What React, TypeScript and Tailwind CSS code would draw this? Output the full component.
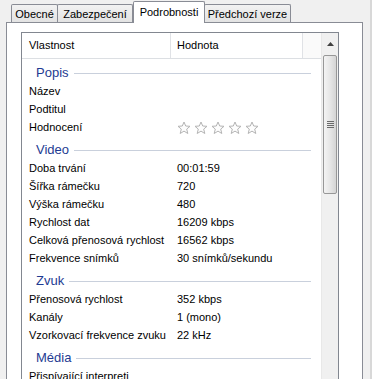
import React from 'react'

type Row = { label: string; value?: string; stars?: boolean }
type Group = { title: string; rows: Row[] }

const groups: Group[] = [
  {
    title: 'Popis',
    rows: [{ label: 'Název' }, { label: 'Podtitul' }, { label: 'Hodnocení', stars: true }],
  },
  {
    title: 'Video',
    rows: [
      { label: 'Doba trvání', value: '00:01:59' },
      { label: 'Šířka rámečku', value: '720' },
      { label: 'Výška rámečku', value: '480' },
      { label: 'Rychlost dat', value: '16209 kbps' },
      { label: 'Celková přenosová rychlost', value: '16562 kbps' },
      { label: 'Frekvence snímků', value: '30 snímků/sekundu' },
    ],
  },
  {
    title: 'Zvuk',
    rows: [
      { label: 'Přenosová rychlost', value: '352 kbps' },
      { label: 'Kanály', value: '1 (mono)' },
      { label: 'Vzorkovací frekvence zvuku', value: '22 kHz' },
    ],
  },
  {
    title: 'Média',
    rows: [{ label: 'Přispívající interpreti' }],
  },
]

const tabs = [
  { label: 'Obecné', w: 'w-[47px]' },
  { label: 'Zabezpečení', w: 'w-[76px]' },
  { label: 'Podrobnosti', w: 'w-[72px]' },
  { label: 'Předchozí verze', w: 'w-[87px]' },
]

function Star() {
  return (
    <svg width="14" height="14" viewBox="0 0 14 14" className="shrink-0">
      <path
        d="M7 1 L8.7 5 L13 5.3 L9.7 8.1 L10.8 12.5 L7 10.1 L3.2 12.5 L4.3 8.1 L1 5.3 L5.3 5 Z"
        fill="#fdfdfd"
        stroke="#b4b4b4"
        strokeWidth="1"
        strokeLinejoin="round"
      />
    </svg>
  )
}

function ScrollBar() {
  return (
    <div className="w-[17px] shrink-0 bg-[#f0f0f0] flex flex-col border-l border-[#e8e8e8]">
      <div className="h-[22px] flex items-center justify-center">
        <svg width="7" height="4" viewBox="0 0 7 4">
          <path d="M0 4 L3.5 0 L7 4 Z" fill="#404040" />
        </svg>
      </div>
      <div className="mx-[1px] h-[139px] rounded-[2px] border border-[#979797] bg-gradient-to-r from-[#f3f3f3] via-[#e6e6e6] to-[#d5d5d5] flex flex-col items-center justify-center gap-[1px]">
        <div className="w-[7px] h-[1px] bg-[#6a6a6a]" />
        <div className="w-[7px] h-[1px] bg-[#6a6a6a]" />
        <div className="w-[7px] h-[1px] bg-[#6a6a6a]" />
        <div className="w-[7px] h-[1px] bg-[#6a6a6a]" />
      </div>
    </div>
  )
}

export default function App() {
  return (
    <div
      className="w-[372px] h-[379px] overflow-hidden bg-[#f0f0f0] text-[11px] text-black flex"
      style={{ fontFamily: '"Liberation Sans", Arial, sans-serif' }}
    >
      <div className="flex flex-col w-[368px]">
        {/* Tabs */}
        <div className="flex items-end pl-[11px] h-[22px] shrink-0">
          {tabs.map((t) => {
            const active = t.label === 'Podrobnosti'
            return active ? (
              <div
                key={t.label}
                className={`${t.w} relative z-10 -mb-px h-[22px] border border-b-0 border-[#898c95] rounded-t-[2px] bg-white flex items-start justify-center pt-[3px] leading-[14px]`}
              >
                {t.label}
              </div>
            ) : (
              <div
                key={t.label}
                className={`${t.w} h-[18px] border border-b-0 border-[#898c95] rounded-t-[2px] bg-gradient-to-b from-[#f2f2f2] to-[#e3e3e3] flex items-center justify-center leading-[14px] -ml-px first:ml-0`}
              >
                {t.label}
              </div>
            )
          })}
        </div>

        {/* Panel */}
        <div className="ml-[6px] w-[357px] flex-1 border border-b-0 border-[#898c95] bg-white pt-[9px] pl-[14px]">
          <div className="w-[318px] h-[400px] border border-b-0 border-[#828790] flex">
            <div className="w-[299px] flex flex-col">
              {/* Header */}
              <div className="h-[26px] flex border-b border-[#dcdfe3] shrink-0">
                <div className="w-[149px] border-r border-[#e0e2e6] pl-[7px] flex items-center">Vlastnost</div>
                <div className="w-[132px] border-r border-[#e0e2e6] pl-[6px] flex items-center">Hodnota</div>
                <div className="flex-1 bg-[#fafafa]" />
              </div>
              {groups.map((g) => (
                <div key={g.title}>
                  <div className="h-[23px] pt-[5px] pl-[14px] pr-[10px] flex items-start">
                    <div className="h-[18px] flex items-center w-full gap-[5px]">
                      <span className="text-[13px] leading-[18px] text-[#1e3b92]">{g.title}</span>
                      <div className="flex-1 h-px bg-[#c9d0dc] mt-[1px]" />
                    </div>
                  </div>
                  {g.rows.map((r) => (
                    <div key={r.label} className="h-[18px] flex items-center">
                      <div className="w-[149px] pl-[7px] whitespace-nowrap">{r.label}</div>
                      <div className="pl-[6px] whitespace-nowrap flex items-center">
                        {r.stars ? (
                          <div className="flex gap-[3px] mt-[1px]">
                            <Star />
                            <Star />
                            <Star />
                            <Star />
                            <Star />
                          </div>
                        ) : (
                          r.value
                        )}
                      </div>
                    </div>
                  ))}
                </div>
              ))}
            </div>
            <ScrollBar />
          </div>
        </div>
      </div>
      <div className="w-[4px] flex">
        <div className="w-[2px]" />
        <div className="w-[2px] bg-[#d8d8d8]" />
      </div>
    </div>
  )
}
